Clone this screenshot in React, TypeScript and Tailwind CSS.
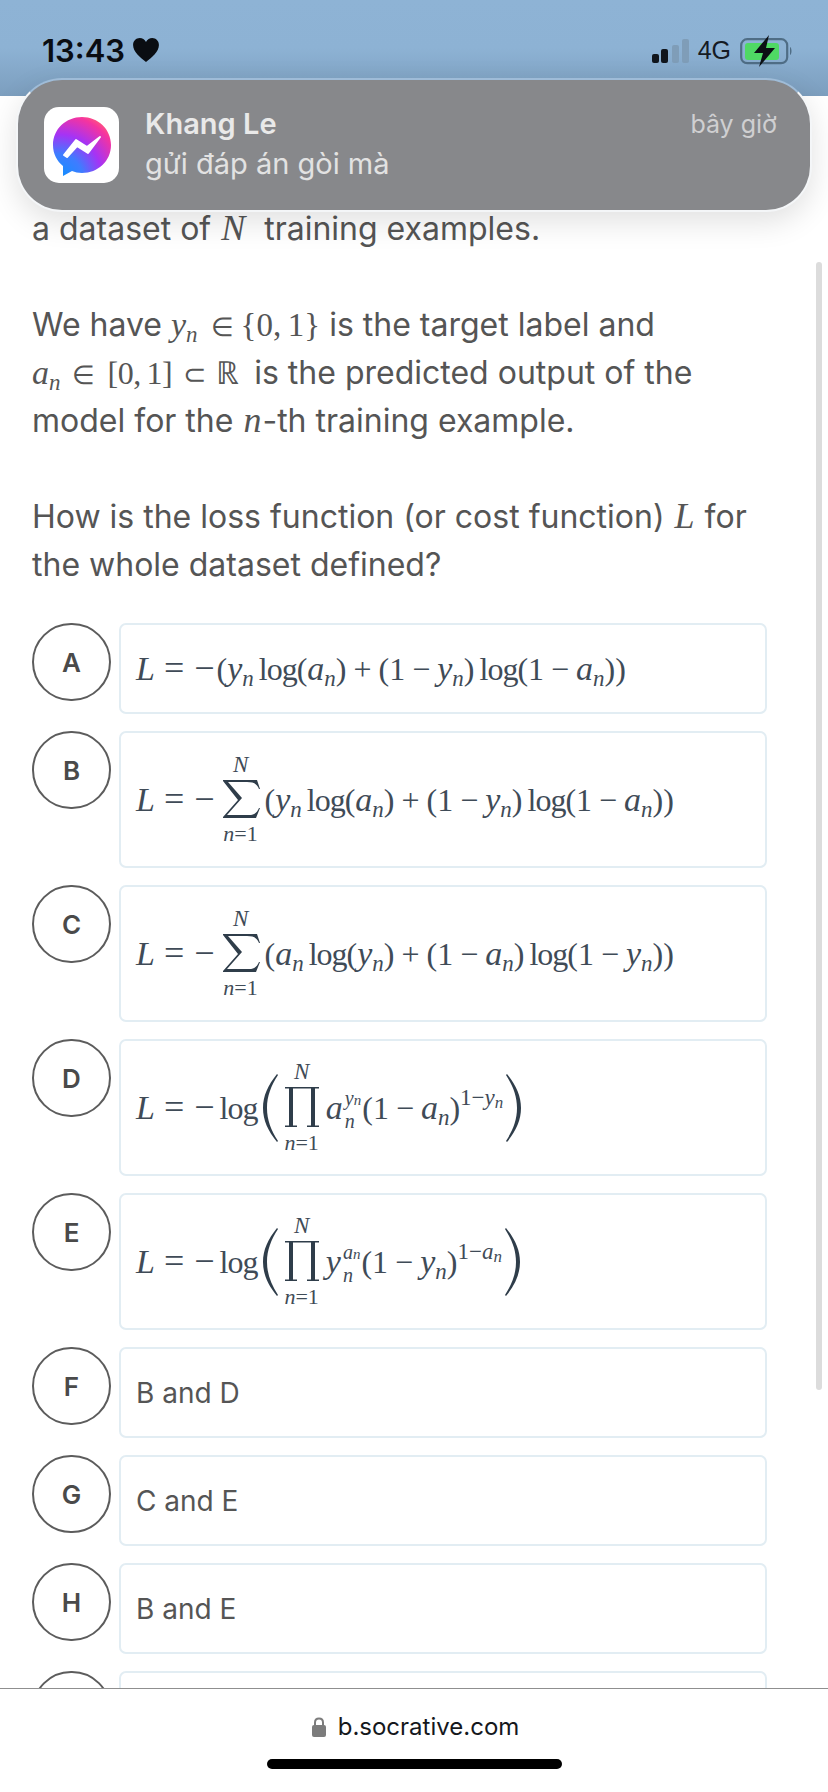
import React from "react";

const M = ({ children }: { children: React.ReactNode }) => (
  <span className="mx-[1px] font-['Liberation_Serif',serif] italic text-[36px] leading-none">{children}</span>
);

const R = ({ children, className = "" }: { children: React.ReactNode; className?: string }) => (
  <span className={`font-['Liberation_Serif',serif] not-italic leading-none ${className}`}>{children}</span>
);

// variable with subscript n
const Sub = ({ v }: { v: string }) => (
  <span className="font-['Liberation_Serif',serif] italic text-[34px] leading-none">
    {v}
    <span className="text-[23px] leading-none relative top-[6px]">n</span>
  </span>
);

const Op = ({ children }: { children: React.ReactNode }) => (
  <span className="mx-[7px] font-['Liberation_Serif',serif] not-italic leading-none">{children}</span>
);

const Log = ({ className = "" }: { className?: string }) => (
  <span className={`font-['Liberation_Serif',serif] tracking-[-1px] leading-none ${className}`}>log</span>
);

const SumSign = () => (
  <svg width="38" height="38" viewBox="0 0 38 38">
    <path d="M1 0H35L38 9H37C35 4 32 2 25 2H6L20 18L5 35H27C32 35 35 33 37 28H38L34 38H1V37L16 20L1 1Z" fill="#2f3d4a" />
  </svg>
);

const ProdSign = () => (
  <svg width="34" height="40" viewBox="0 0 34 40">
    <path d="M0 0H34V1.5H30V38.5H34V40H22V38.5H26V1.5H8V38.5H12V40H0V38.5H4V1.5H0Z" fill="#2f3d4a" />
  </svg>
);

const BigParen = ({ flip }: { flip?: boolean }) => (
  <svg width="15" height="68" viewBox="0 0 15 68" className={flip ? "-scale-x-100" : ""}>
    <path d="M14 0C5 11 0 22 0 34C0 46 5 57 14 68L15 67C8 56 4 46 4 34C4 22 8 12 15 1Z" fill="#2f3d4a" />
  </svg>
);

const Limits = ({ children }: { children: React.ReactNode }) => (
  <div className="flex flex-col items-center text-[21px] leading-none">
    <span className="font-['Liberation_Serif',serif] italic text-[23px] leading-[21px]">N</span>
    <div className="mt-[5px] mb-[5px] flex">{children}</div>
    <span className="font-['Liberation_Serif',serif] text-[22px]">
      <i>n</i>=1
    </span>
  </div>
);

const SumBody = ({ a, b }: { a: string; b: string }) => (
  <span className="whitespace-nowrap">
    <R>(</R>
    <Sub v={a} />
    <Log className="ml-[5px]" />
    <R>(</R>
    <Sub v={b} />
    <R>)</R>
    <Op>+</Op>
    <R>(1</R>
    <Op>−</Op>
    <Sub v={a} />
    <R>)</R>
    <Log className="ml-[5px]" />
    <R>(1</R>
    <Op>−</Op>
    <Sub v={b} />
    <R>))</R>
  </span>
);

const Lhs = () => (
  <span className="whitespace-nowrap">
    <span className="font-['Liberation_Serif',serif] italic text-[34px] leading-none">L</span>
    <R className="ml-[9px] text-[36px]">=</R>
    <R className="ml-[10px] text-[36px]">−</R>
  </span>
);

const FormulaA = () => (
  <div className="flex items-center">
    <Lhs />
    <span className="ml-[2px] flex">
      <SumBody a="y" b="a" />
    </span>
  </div>
);

const FormulaSum = ({ a, b }: { a: string; b: string }) => (
  <div className="flex items-center">
    <Lhs />
    <div className="ml-[7px] mr-[5px]">
      <Limits>
        <SumSign />
      </Limits>
    </div>
    <SumBody a={a} b={b} />
  </div>
);

const FormulaProd = ({ a, b }: { a: string; b: string }) => (
  <div className="flex items-center">
    <Lhs />
    <Log className="ml-[5px]" />
    <div className="ml-[6px] flex items-center">
      <BigParen />
    </div>
    <div className="ml-[6px] mr-[7px]">
      <Limits>
        <ProdSign />
      </Limits>
    </div>
    <span className="whitespace-nowrap font-['Liberation_Serif',serif]">
      <i className="text-[34px]">{a}</i>
      <span className="ml-[2px] inline-flex flex-col align-middle text-[20px] leading-[21px] italic relative -top-[1px]">
        <span>
          {b}
          <span className="text-[15px]">n</span>
        </span>
        <span>n</span>
      </span>
      <span className="ml-[1px]">(1</span>
      <span className="mx-[7px]">−</span>
      <Sub v={a} />)
      <span className="text-[23px] relative -top-[14px]">
        1−<i>{b}</i>
        <i className="text-[17px] relative top-[3px]">n</i>
      </span>
    </span>
    <div className="ml-[3px] flex items-center">
      <BigParen flip />
    </div>
  </div>
);

type Option = { letter: string; body: React.ReactNode; tall?: boolean };

const options: Option[] = [
  { letter: "A", body: <FormulaA /> },
  { letter: "B", body: <FormulaSum a="y" b="a" />, tall: true },
  { letter: "C", body: <FormulaSum a="a" b="y" />, tall: true },
  { letter: "D", body: <FormulaProd a="a" b="y" />, tall: true },
  { letter: "E", body: <FormulaProd a="y" b="a" />, tall: true },
  { letter: "F", body: "B and D" },
  { letter: "G", body: "C and E" },
  { letter: "H", body: "B and E" },
  { letter: "I", body: "" },
];

const OptionRow = ({ option }: { option: Option }) => (
  <div className="flex gap-2">
    <div className="w-[79px] h-[78px] shrink-0 rounded-full border-2 border-[#5c5c5c] flex items-center justify-center text-[26px] font-semibold text-[#4a4a4a]">
      {option.letter !== "I" && option.letter}
    </div>
    <div
      className={`w-[648px] ${option.tall ? "h-[137px]" : "h-[91px]"} shrink-0 rounded-[7px] border-2 border-[#e2edf3] pl-[15px] flex items-center text-[32px] text-[#3f4b57]`}
    >
      {typeof option.body === "string" ? (
        <span className="text-[28px] text-[#555555]">{option.body}</span>
      ) : (
        option.body
      )}
    </div>
  </div>
);

const MessengerIcon = () => (
  <div className="w-[75px] h-[76px] shrink-0 rounded-[15px] bg-white flex items-center justify-center">
    <svg width="75" height="76" viewBox="0 0 75 76">
      <defs>
        <radialGradient id="msg" cx="14" cy="72" r="72" gradientUnits="userSpaceOnUse">
          <stop offset="0" stopColor="#0a93ff" />
          <stop offset="0.35" stopColor="#3f7cff" />
          <stop offset="0.62" stopColor="#a533f5" />
          <stop offset="0.9" stopColor="#f5349f" />
          <stop offset="1" stopColor="#ff5a7a" />
        </radialGradient>
      </defs>
      <path
        d="M38 10C22 10 9 22 9 38C9 47 13 54 19 59V69L28 64C31 65 34 66 38 66C54 66 67 54 67 38C67 22 54 10 38 10Z"
        fill="url(#msg)"
      />
      <path d="M20 48L32 33L43 40L56 30L44 46L33 39L23 50Z" fill="#ffffff" stroke="#ffffff" strokeWidth="2" strokeLinejoin="round" />
    </svg>
  </div>
);

const StatusIcons = () => (
  <div className="flex items-center">
    <div className="flex items-end gap-[2px] h-[24px]">
      <div className="w-[7px] h-[9px] rounded-[2px] bg-[#10151c]" />
      <div className="w-[7px] h-[14px] rounded-[2px] bg-[#10151c]" />
      <div className="ml-[2px] w-[7px] h-[18px] rounded-[2px] bg-[#7f9db8]" />
      <div className="ml-[1px] w-[7px] h-[24px] rounded-[2px] bg-[#7f9db8]" />
    </div>
    <span className="ml-[9px] text-[25px] font-medium text-[#151b24] font-['Liberation_Sans',sans-serif]">4G</span>
    <svg width="54" height="32" viewBox="0 0 54 32" className="ml-[9px]">
      <rect x="1.2" y="4.2" width="46" height="24" rx="6" fill="none" stroke="#4f6d85" strokeWidth="2.2" />
      <rect x="5" y="8" width="34" height="17" rx="3" fill="#4fd964" />
      <path d="M50 12C52 13 52 19 50 20Z" fill="#4f6d85" />
      <path d="M29 0L14 18H23L19 32L35 13H26Z" fill="#0b0f14" />
    </svg>
  </div>
);

export default function App() {
  return (
    <div className="relative w-[828px] h-[1792px] overflow-hidden bg-white flex flex-col font-['Inter',sans-serif]">
      <header className="h-[96px] shrink-0 bg-linear-to-b from-[#8eb3d5] via-[#8db2d4] to-[#7c9ebe] flex items-start justify-between pl-[42px] pr-[34px] pt-[32px]">
        <div className="flex items-center gap-[8px] h-[36px] text-black">
          <span className="text-[31px] font-semibold leading-none text-[#0a0d12]">13:43</span>
          <svg width="26" height="24" viewBox="0 0 28 26">
            <path d="M14 26C8 21 0 15 0 7.5C0 3 3.4 0 7.2 0C10 0 12.6 1.5 14 4.2C15.4 1.5 18 0 20.8 0C24.6 0 28 3 28 7.5C28 15 20 21 14 26Z" fill="#0a0d12" />
          </svg>
        </div>
        <StatusIcons />
      </header>

      <main className="flex-1 overflow-hidden pl-[32px] pt-[109px] text-[32px] leading-[48px] text-[#555555]">
        <p className="mb-[48px] whitespace-nowrap">
          a dataset of <M>N</M>&nbsp; training examples.
        </p>
        <p className="mb-[48px] whitespace-nowrap">
          We have <Sub v="y" />
          <R className="ml-[13px] text-[26px]">∈</R>
          <R className="ml-[7px] text-[33px]">{"{0,\u20091}"}</R>
          <span className="ml-[9px]">is the target label and</span>
          <br />
          <Sub v="a" />
          <R className="ml-[11px] text-[26px]">∈</R>
          <R className="ml-[13px] text-[32px] tracking-[-0.5px]">{"[0,\u20091]"}</R>
          <R className="ml-[11px] text-[28px]">⊂</R>
          <R className="ml-[10px] text-[32px]">ℝ</R>
          <span className="ml-[15px]">is the predicted output of the</span>
          <br />
          model for the <M>n</M>-th training example.
        </p>
        <p className="mb-[34px] whitespace-nowrap">
          How is the loss function (or cost function) <M>L</M> for
          <br />
          the whole dataset defined?
        </p>
        <div className="flex flex-col gap-[17px] leading-normal">
          {options.map((option) => (
            <OptionRow key={option.letter} option={option} />
          ))}
        </div>
      </main>

      <footer className="h-[104px] shrink-0 border-t border-[#8f8f8f] bg-white flex flex-col items-center pt-[22px]">
        <div className="ml-[3px] flex items-center gap-[12px] h-[32px] text-[24px] text-[#15181c]">
          <svg width="14" height="20" viewBox="0 0 14 20">
            <path d="M3 9V5.5C3 3 4.8 1.5 7 1.5C9.2 1.5 11 3 11 5.5V9" fill="none" stroke="#7c7c7c" strokeWidth="2" />
            <rect x="0" y="8" width="14" height="12" rx="2" fill="#7c7c7c" />
          </svg>
          <span>b.socrative.com</span>
        </div>
        <div className="mt-[16px] w-[295px] h-[10px] rounded-full bg-black" />
      </footer>

      <div className="absolute left-[816px] top-[262px] w-[6px] h-[1128px] rounded-full bg-[#dcdcdc]" />

      <div className="absolute left-[16px] top-[78px] w-[796px] h-[134px] rounded-[46px] border-2 border-[#f4f6f8] border-t-[#9fbcd8] bg-[#87888b] shadow-[0_10px_30px_rgba(0,0,0,0.12)] flex items-start pl-[26px] pr-[33px] pt-[27px]">
        <MessengerIcon />
        <div className="ml-[26px] -mt-[3px] flex-1 text-[29px] leading-[40px] text-[#e9e9e9]">
          <div className="font-semibold">Khang Le</div>
          <div className="text-[#e2e2e2]">gửi đáp án gòi mà</div>
        </div>
        <span className="-mt-[3px] text-[25px] leading-[40px] text-[#cfcfd1]">bây giờ</span>
      </div>
    </div>
  );
}
